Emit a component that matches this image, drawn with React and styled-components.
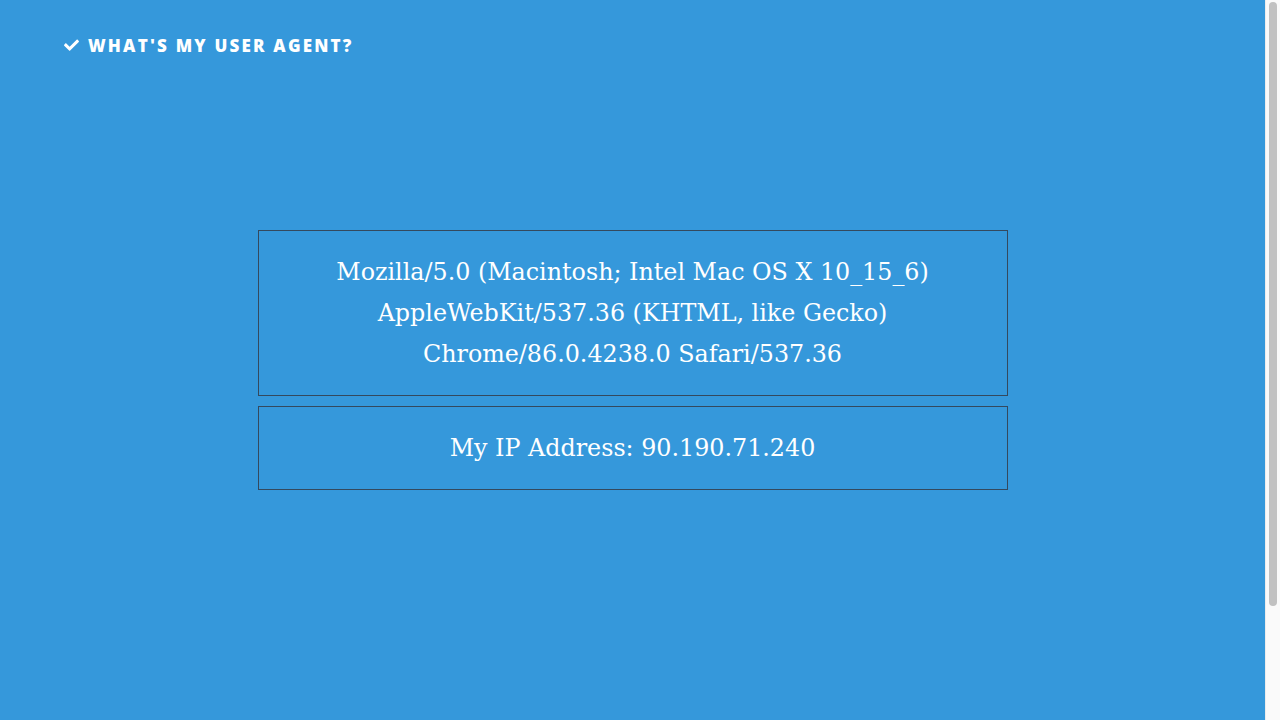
import React from 'react'
import styled, { createGlobalStyle } from 'styled-components'

const Global = createGlobalStyle`
  body {
    margin: 0;
    background: #3598db;
    color: #fff;
  }
`;

const Page = styled.div`
  min-height: 850px;
  padding-right: 15px;
  display: flex;
  flex-direction: column;
`;

/* stand-in for the browser's classic scrollbar */
const ScrollTrack = styled.div`
  position: fixed;
  top: 0;
  right: 0;
  bottom: 0;
  width: 15px;
  background: #fafafa;
  border-left: 1px solid #ececec;
  box-sizing: border-box;
`;

const ScrollThumb = styled.div`
  margin: 2px 0 0 3px;
  width: 8px;
  height: 604px;
  border-radius: 4px;
  background: #c1c1c1;
`;

const Header = styled.header`
  padding: 34px 64px 0;
  display: flex;
  align-items: center;
  gap: 9px;
  font-family: "Open Sans", "Liberation Sans", sans-serif;
  font-weight: 800;
  font-size: 17px;
  letter-spacing: 2.2px;
  text-transform: uppercase;
  height: 22px;
`;

const Main = styled.main`
  display: flex;
  flex-direction: column;
  align-items: center;
  gap: 10px;
  margin-top: 174px;
`;

const Box = styled.div`
  width: 748px;
  border: 1px solid #34495e;
  padding: 21px 0 20px;
  text-align: center;
  font-family: "DejaVu Serif", "Liberation Serif", serif;
  font-size: 23.8px;
  line-height: 41px;
`;

const Check = () => (
  <svg width="15" height="12" viewBox="0 0 512 400" fill="#fff">
    <path d="M173.9 389.8L7.5 223.4c-10-10-10-26.2 0-36.2l36.2-36.2c10-10 26.2-10 36.2 0L192 263.1 432.1 23c10-10 26.2-10 36.2 0l36.2 36.2c10 10 10 26.2 0 36.2L210.1 389.8c-10 10-26.2 10-36.2 0z" />
  </svg>
);

const App = () => (
  <Page>
    <Global />
    <Header>
      <Check />
      What's my user agent?
    </Header>
    <Main>
      <Box>
        Mozilla/5.0 (Macintosh; Intel Mac OS X 10_15_6)<br />
        AppleWebKit/537.36 (KHTML, like Gecko)<br />
        Chrome/86.0.4238.0 Safari/537.36
      </Box>
      <Box>My IP Address: 90.190.71.240</Box>
    </Main>
    <ScrollTrack>
      <ScrollThumb />
    </ScrollTrack>
  </Page>
);

export default App
